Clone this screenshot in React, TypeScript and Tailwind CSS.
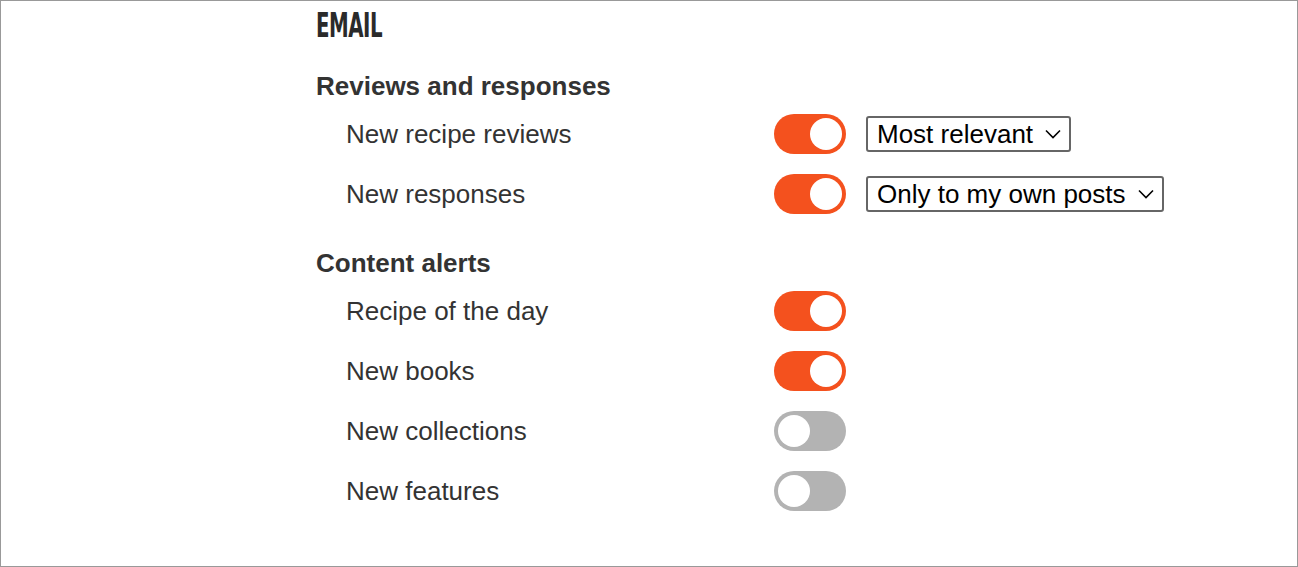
type Row = { label: string; on: boolean; select?: string }

const reviews: Row[] = [
  { label: 'New recipe reviews', on: true, select: 'Most relevant' },
  { label: 'New responses', on: true, select: 'Only to my own posts' },
]

const alerts: Row[] = [
  { label: 'Recipe of the day', on: true },
  { label: 'New books', on: true },
  { label: 'New collections', on: false },
  { label: 'New features', on: false },
]

function Toggle({ on }: { on: boolean }) {
  return (
    <div
      className={
        'w-[72px] h-10 rounded-full p-1 flex shrink-0 ' +
        (on ? 'bg-[#f4511e] justify-end' : 'bg-[#b3b3b3] justify-start')
      }
    >
      <div className="w-8 h-8 rounded-full bg-white" />
    </div>
  )
}

function SettingRow({ row }: { row: Row }) {
  return (
    <div className="flex items-center h-[60px] pl-[30px]">
      <span className="w-[428px] text-[26px] text-[#333]">{row.label}</span>
      <Toggle on={row.on} />
      {row.select && (
        <div className="ml-5 h-9 pl-[9px] pr-[8px] border-2 border-[#666] rounded-[3px] flex items-center gap-[12px] text-[26px] text-black">
          <span>{row.select}</span>
          <svg width="16" height="10" viewBox="0 0 16 10" fill="none" stroke="black" strokeWidth="1.6">
            <path d="M1 1.5 8 8.5 15 1.5" />
          </svg>
        </div>
      )}
    </div>
  )
}

export default function App() {
  return (
    <div className="w-[1298px] h-[567px] border border-[#999] bg-white font-['Liberation_Sans',Arial,sans-serif]">
      <div className="pl-[315px] pt-[4px]">
        <h1 className="inline-block origin-left scale-x-[0.6] font-['DejaVu_Sans',sans-serif] font-bold text-[33px] leading-[42px] text-[#2a2a2a] tracking-tight">
          EMAIL
        </h1>
        <h2 className="mt-[24px] text-[26px] font-bold text-[#333] leading-[30px]">
          Reviews and responses
        </h2>
        <div className="mt-[3px]">
          {reviews.map((r) => (
            <SettingRow key={r.label} row={r} />
          ))}
        </div>
        <h2 className="mt-[24px] text-[26px] font-bold text-[#333] leading-[30px]">
          Content alerts
        </h2>
        <div className="mt-[3px]">
          {alerts.map((r) => (
            <SettingRow key={r.label} row={r} />
          ))}
        </div>
      </div>
    </div>
  )
}
